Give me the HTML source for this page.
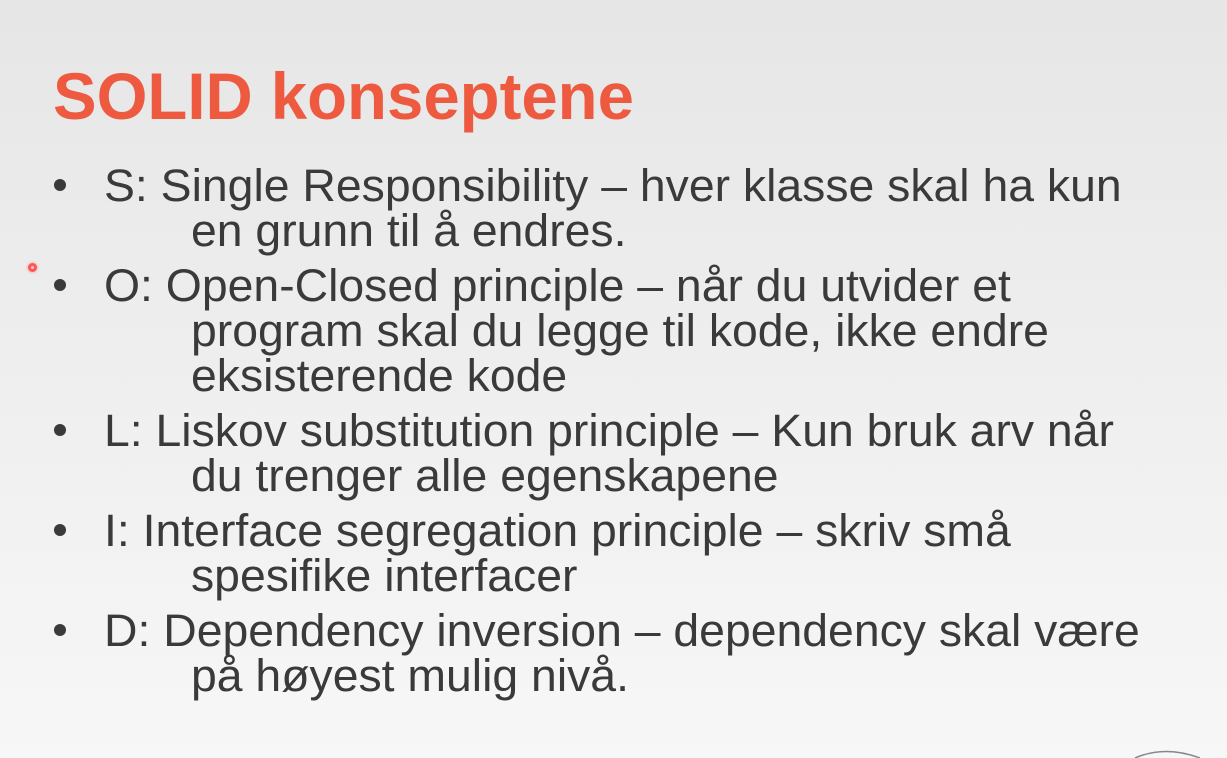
<!DOCTYPE html>
<html><head><meta charset="utf-8"><style>
html,body{margin:0;padding:0;width:1227px;height:758px;overflow:hidden}
body{position:relative;background:linear-gradient(#e6e6e6 0%,#ededed 40%,#f7f7f7 100%);font-family:"Liberation Sans",Arial,sans-serif}
.t{position:absolute;left:53px;top:63px;font-size:66px;line-height:1;font-weight:bold;color:#ee5a40;white-space:nowrap;transform:scaleX(0.99);transform-origin:0 0}
.l{position:absolute;font-size:45px;line-height:1;color:#3a3a3a;white-space:nowrap;transform:scaleX(1.03);transform-origin:0 0}
.b{position:absolute;left:54px;width:12px;height:12px;border-radius:50%;background:#3a3a3a}
.dot{position:absolute;left:28px;top:263px;width:9px;height:9px;border-radius:50%;background:#f55;box-shadow:0 0 3px #f88}
.dot:after{content:"";position:absolute;left:3px;top:3px;width:3px;height:3px;border-radius:50%;background:#fcc}
</style></head><body>
<div class="t">SOLID konseptene</div>
<div class="dot"></div>
<div class="b" style="top:179px"></div>
<div class="l" style="left:104px;top:163px">S: Single Responsibility – hver klasse skal ha kun</div>
<div class="l" style="left:191px;top:208px">en grunn til å endres.</div>
<div class="b" style="top:279px"></div>
<div class="l" style="left:104px;top:263px">O: Open-Closed principle – når du utvider et</div>
<div class="l" style="left:191px;top:308px">program skal du legge til kode, ikke endre</div>
<div class="l" style="left:191px;top:353px">eksisterende kode</div>
<div class="b" style="top:424px"></div>
<div class="l" style="left:104px;top:408px">L: Liskov substitution principle – Kun bruk arv når</div>
<div class="l" style="left:191px;top:453px">du trenger alle egenskapene</div>
<div class="b" style="top:524px"></div>
<div class="l" style="left:104px;top:508px">I: Interface segregation principle – skriv små</div>
<div class="l" style="left:191px;top:553px">spesifike interfacer</div>
<div class="b" style="top:624px"></div>
<div class="l" style="left:104px;top:608px">D: Dependency inversion – dependency skal være</div>
<div class="l" style="left:191px;top:653px">på høyest mulig nivå.</div>
<svg style="position:absolute;left:1120px;top:745px" width="100" height="13"><path d="M15 13 Q45 0 80 13" fill="none" stroke="#888" stroke-width="1.5"/></svg>
</body></html>
